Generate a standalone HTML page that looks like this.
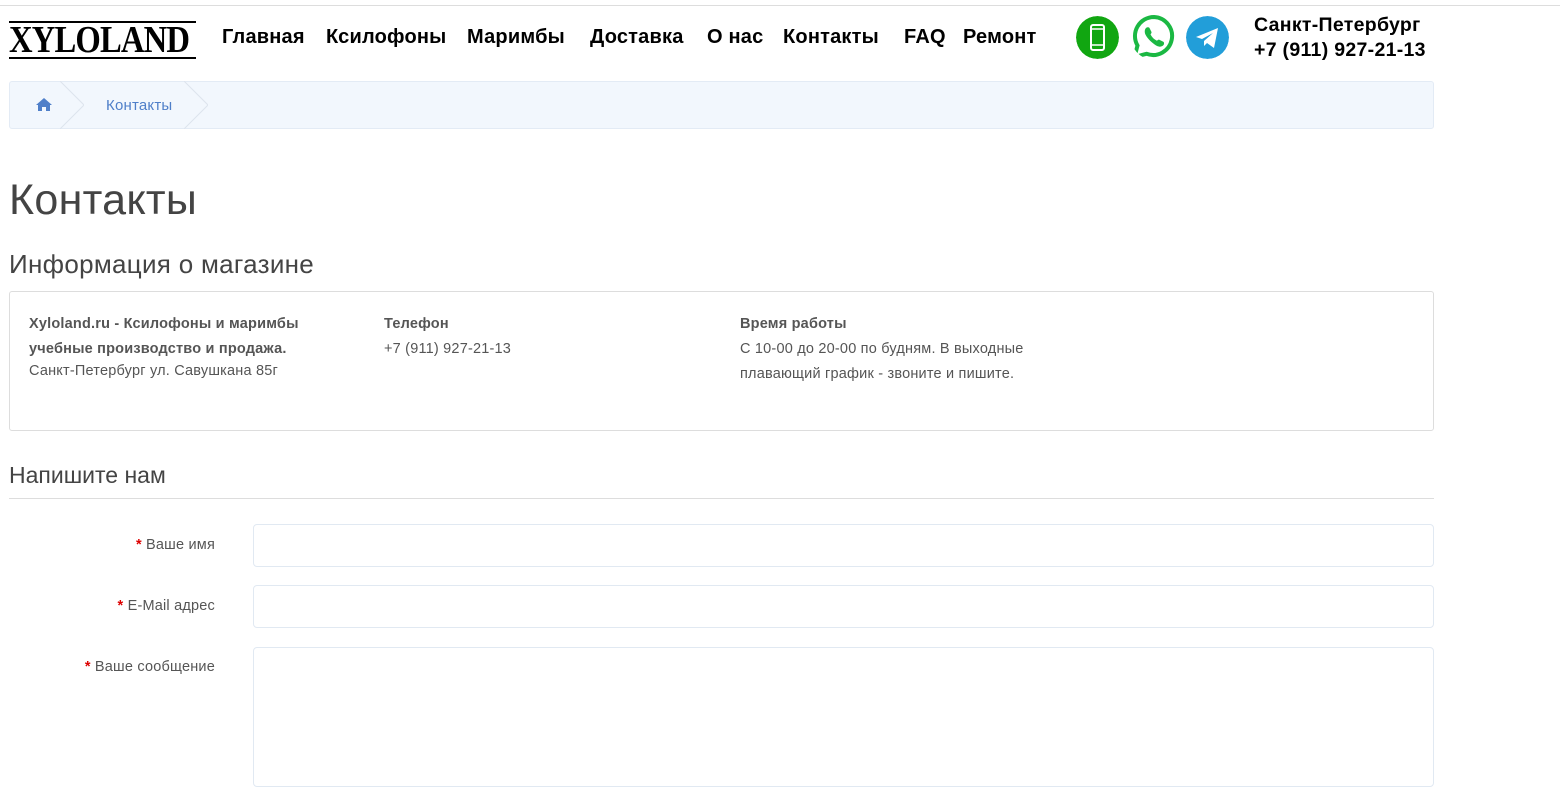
<!DOCTYPE html>
<html><head><meta charset="utf-8"><style>
*{box-sizing:border-box;margin:0;padding:0}
body{width:1560px;height:768px;overflow:hidden;background:#fff;font-family:"Liberation Sans","DejaVu Sans",sans-serif;color:#555;position:relative}
.top{position:absolute;left:0;top:5px;width:1560px;border-top:1px solid #ddd}
.logo{position:absolute;left:9px;top:21px;width:187px;height:38px;border-top:2px solid #000;border-bottom:2px solid #000;overflow:hidden}
.logo span{position:absolute;left:0;top:0;font-family:"Liberation Serif",serif;font-weight:bold;font-size:38px;color:#000;line-height:34px;letter-spacing:-1px;transform:scaleX(0.86);transform-origin:0 0;white-space:nowrap}
.nav{position:absolute;top:26px;font-weight:bold;font-size:20px;color:#000;letter-spacing:0.2px}
.ic{position:absolute;top:16px;width:43px;height:43px;border-radius:50%}
.city{position:absolute;left:1254px;top:13px;font-weight:bold;font-size:19.5px;color:#000;line-height:25px;letter-spacing:0.3px}
.bc{position:absolute;left:9px;top:81px;width:1425px;height:48px;background:#f2f7fd;border:1px solid #e3ebf5;border-radius:3px}
.bc .sep{position:absolute;top:-1px;width:24px;height:48px}
h1{position:absolute;left:9px;top:176px;font-weight:normal;font-size:43px;color:#444;letter-spacing:0.3px}
h2{position:absolute;left:9px;top:249px;font-weight:normal;font-size:26px;color:#444;letter-spacing:0.3px}
.box{position:absolute;left:9px;top:291px;width:1425px;height:140px;border:1px solid #ddd;border-radius:3px;font-size:14.5px;line-height:25px;color:#555;letter-spacing:0.2px}
.box div{position:absolute;top:20px}
h3{position:absolute;left:9px;top:462px;font-weight:normal;font-size:23px;color:#444}
.hr{position:absolute;left:9px;top:498px;width:1425px;border-top:1px solid #ddd}
.lbl{position:absolute;right:1345px;font-size:14.5px;color:#555;white-space:nowrap;letter-spacing:0.2px}
.lbl b{color:#d00}
.in{position:absolute;left:253px;width:1181px;border:1px solid #e1e9f2;border-radius:4px;background:#fff}
</style></head><body>
<div class="top"></div>
<div class="logo"><span>XYLOLAND</span></div>
<div class="nav" style="left:222px">Главная</div>
<div class="nav" style="left:326px">Ксилофоны</div>
<div class="nav" style="left:467px">Маримбы</div>
<div class="nav" style="left:590px">Доставка</div>
<div class="nav" style="left:707px">О нас</div>
<div class="nav" style="left:783px">Контакты</div>
<div class="nav" style="left:904px">FAQ</div>
<div class="nav" style="left:963px">Ремонт</div>
<svg class="ic" style="left:1076px" viewBox="0 0 43 43"><circle cx="21.5" cy="21.5" r="21.5" fill="#11a611"/><rect x="15" y="9" width="13" height="25" rx="2" fill="none" stroke="#fff" stroke-width="2"/><line x1="15" y1="13" x2="28" y2="13" stroke="#fff" stroke-width="1.5"/><line x1="15" y1="29" x2="28" y2="29" stroke="#fff" stroke-width="1.5"/></svg>
<svg class="ic" style="left:1131px;top:14px;width:46px;height:46px" viewBox="0 0 46 46"><path d="M23 3a19 19 0 0 0-16.5 28.5L3.5 43l12-3.2A19 19 0 1 0 23 3z" fill="none" stroke="#1bb843" stroke-width="4"/><path d="M15 14c1-1 3-1 3.5 0l2 4c.3.8-.5 1.8-1 2.3 1.5 3 3.5 5 6.5 6.5.5-.5 1.5-1.5 2.3-1l4 2c1 .5 1 2.5 0 3.5-2 2-5 2-9-1s-7-6-9-10c-1-3-.5-5 .7-6.3z" fill="#1bb843"/></svg>
<svg class="ic" style="left:1186px" viewBox="0 0 43 43"><circle cx="21.5" cy="21.5" r="21.5" fill="#229ed9"/><path d="M10 21l22-9-4 20-7-5-3 3v-5l9-8-11 6z" fill="#fff"/></svg>
<div class="city">Санкт-Петербург<br>+7 (911) 927-21-13</div>
<div class="bc">
<svg style="position:absolute;left:26px;top:15px" width="16" height="14" viewBox="0 0 16 14"><path d="M8 1L0 8h2v6h4V10h4v4h4V8h2z" fill="#4f7fc9"/></svg>
<svg class="sep" style="left:50px" viewBox="0 0 24 48"><path d="M0 0L24 24 0 48" fill="none" stroke="#dde4ed"/></svg>
<span style="position:absolute;left:96px;top:15px;font-size:15px;color:#4f7fc9;letter-spacing:0.2px">Контакты</span>
<svg class="sep" style="left:174px" viewBox="0 0 24 48"><path d="M0 0L24 24 0 48" fill="none" stroke="#dde4ed"/></svg>
</div>
<h1>Контакты</h1>
<h2>Информация о магазине</h2>
<div class="box">
<div style="left:19px"><b>Xyloland.ru - Ксилофоны и маримбы<br>учебные производство и продажа.</b><br><span style="position:relative;top:-3px">Санкт-Петербург ул. Савушкана 85г</span></div>
<div style="left:374px"><b>Телефон</b><br>+7 (911) 927-21-13</div>
<div style="left:730px"><b>Время работы</b><br>С 10-00 до 20-00 по будням. В выходные<br>плавающий график - звоните и пишите.</div>
</div>
<h3>Напишите нам</h3>
<div class="hr"></div>
<div class="lbl" style="top:537px"><b>*</b> Ваше имя</div>
<div class="in" style="top:524px;height:43px"></div>
<div class="lbl" style="top:598px"><b>*</b> E-Mail адрес</div>
<div class="in" style="top:585px;height:43px"></div>
<div class="lbl" style="top:659px"><b>*</b> Ваше сообщение</div>
<div class="in" style="top:647px;height:140px"></div>
</body></html>
